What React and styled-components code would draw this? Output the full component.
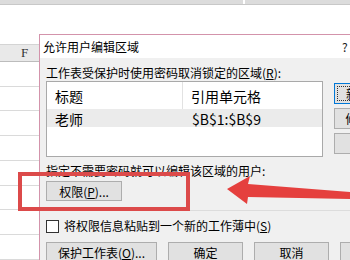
import React from "react";
import styled, { createGlobalStyle } from "styled-components";

const GlobalStyle = createGlobalStyle`
  html, body {
    margin: 0;
    padding: 0;
  }
  body {
    width: 350px;
    height: 260px;
    overflow: hidden;
    background: #fff;
    font-family: "Noto Sans CJK SC", "Noto Sans", sans-serif;
    color: #000;
  }
`;

const Screen = styled.div`
  position: relative;
  width: 350px;
  height: 260px;
  overflow: hidden;
  background: #fff;
`;

/* spreadsheet behind the dialog */
const Sheet = styled.div`
  display: flex;
  flex-direction: column;
  height: 100%;
`;

const Ribbon = styled.div`
  display: flex;
  height: 4px;
  border-bottom: 1px solid #c8c8c8;
`;

const RibbonPart = styled.div`
  width: ${p => p.w || "auto"};
  flex: ${p => (p.w ? "none" : 1)};
  background: #dcdcdc;
  margin-right: ${p => p.gap || 0}px;
`;

const FormulaArea = styled.div`
  height: 41px;
`;

const ColHeader = styled.div`
  height: 16px;
  background: #e9e9e9;
  border-top: 1px solid #d4d4d4;
  border-bottom: 1px solid #bcbcbc;
  font-family: "Liberation Serif", serif;
  font-size: 13px;
  line-height: 16px;
  color: #333;
  padding-left: 21px;
`;

const GridRow = styled.div`
  height: 25px;
  border-bottom: 1px solid #dadada;
`;

/* dialog window */
const Dialog = styled.div`
  position: absolute;
  left: 39px;
  top: 34px;
  width: 420px;
  height: 240px;
  border: 1px solid #d393ab;
  background: #f0f0f0;
  display: flex;
  flex-direction: column;
`;

const TitleBar = styled.div`
  height: 23px;
  background: #fff;
  display: flex;
  align-items: center;
  padding-left: 3px;
  font-size: 12px;
`;

const Title = styled.span`
  width: 299px;
`;

const HelpGlyph = styled.span`
  font-size: 12px;
  color: #222;
`;

const Body = styled.div`
  padding-left: 6px;
  display: flex;
  flex-direction: column;
  font-size: 12px;
`;

const Label = styled.div`
  height: 14px;
  line-height: 14px;
  margin-top: ${p => p.mt || 0}px;
  white-space: nowrap;
`;

const Row = styled.div`
  display: flex;
  gap: ${p => p.gap || 11}px;
  margin-top: ${p => p.mt || 0}px;
  align-items: ${p => p.align || "flex-start"};
`;

const ListBox = styled.div`
  flex: none;
  width: 277px;
  height: 76px;
  box-sizing: border-box;
  background: #fff;
  border: 1px solid #a9a9a9;
  font-size: 14px;
`;

const ListRow = styled.div`
  display: grid;
  grid-template-columns: 136px 1fr;
  height: ${p => p.h}px;
  align-items: center;
  background: ${p => (p.selected ? "#ebebeb" : "transparent")};
`;

const Cell = styled.div`
  padding-left: ${p => p.pl}px;
  height: 100%;
  display: flex;
  align-items: center;
  border-right: ${p => (p.divider ? "1px solid #e2e2e2" : "none")};
`;

const SideButtons = styled.div`
  flex: none;
  display: flex;
  flex-direction: column;
  gap: 4px;
  margin-top: 2px;
`;

const Button = styled.div`
  flex: none;
  width: ${p => p.w || 75}px;
  height: ${p => p.h || 21}px;
  box-sizing: border-box;
  display: flex;
  align-items: center;
  justify-content: center;
  background: #e1e1e1;
  border: 1px solid ${p => (p.primary ? "#0078d7" : "#adadad")};
  color: ${p => (p.disabled ? "#9a9a9a" : "#000")};
  font-size: 12px;
  white-space: nowrap;
  outline: ${p => (p.primary ? "1px dotted #333" : "none")};
  outline-offset: -4px;
  margin-top: ${p => p.mt || 0}px;
`;

const Separator = styled.div`
  height: 0;
  border-top: 1px solid #dcdcdc;
  margin-top: ${p => p.mt || 0}px;
`;

const CheckBox = styled.span`
  width: 11px;
  height: 11px;
  border: 1px solid #333;
  background: #fff;
  flex: none;
`;

/* red annotation overlay */
const Marker = styled.div`
  position: absolute;
  left: 18px;
  top: 172px;
  width: 172px;
  height: 39px;
  box-sizing: border-box;
  border: 4px solid #dc4a4a;
`;

const Overlay = styled.svg`
  position: absolute;
  left: 0;
  top: 0;
  pointer-events: none;
`;

const gridRows = Array.from({ length: 8 });

export default function App() {
  return (
    <>
      <GlobalStyle />
      <Screen>
        <Sheet>
          <Ribbon>
            <RibbonPart w="243px" gap={2} />
            <RibbonPart />
          </Ribbon>
          <FormulaArea />
          <ColHeader>F</ColHeader>
          {gridRows.map((_, i) => (
            <GridRow key={i} />
          ))}
        </Sheet>

        <Dialog>
          <TitleBar>
            <Title>允许用户编辑区域</Title>
            <HelpGlyph>?</HelpGlyph>
          </TitleBar>
          <Body>
            <Label mt={8}>
              工作表受保护时使用密码取消锁定的区域(<u>R</u>):
            </Label>
            <Row mt={1}>
              <ListBox>
                <ListRow h={27}>
                  <Cell pl={8} divider>标题</Cell>
                  <Cell pl={8}>引用单元格</Cell>
                </ListRow>
                <ListRow h={18} selected>
                  <Cell pl={8}>老师</Cell>
                  <Cell pl={9}>$B$1:$B$9</Cell>
                </ListRow>
              </ListBox>
              <SideButtons>
                <Button primary>新建(<u>N</u>)...</Button>
                <Button>修改(<u>M</u>)...</Button>
                <Button disabled>删除(<u>D</u>)</Button>
              </SideButtons>
            </Row>
            <Label mt={7}>指定不需要密码就可以编辑该区域的用户:</Label>
            <Button w={76} h={20} mt={3}>
              权限(<u>P</u>)...
            </Button>
            <Separator mt={9} />
            <Row mt={8} gap={5} align="center">
              <CheckBox />
              <Label>
                将权限信息粘贴到一个新的工作薄中(<u>S</u>)
              </Label>
            </Row>
            <Row mt={9}>
              <Button w={111}>保护工作表(<u>O</u>)...</Button>
              <Button>确定</Button>
              <Button>取消</Button>
              <Button>应用(<u>A</u>)</Button>
            </Row>
          </Body>
        </Dialog>

        <Marker />
        <Overlay width="350" height="260" viewBox="0 0 350 260">
          <polygon
            points="227,189 250,176 248,184 350,192 350,199 248,197 247,204"
            fill="#e5403e"
          />
        </Overlay>
      </Screen>
    </>
  );
}
